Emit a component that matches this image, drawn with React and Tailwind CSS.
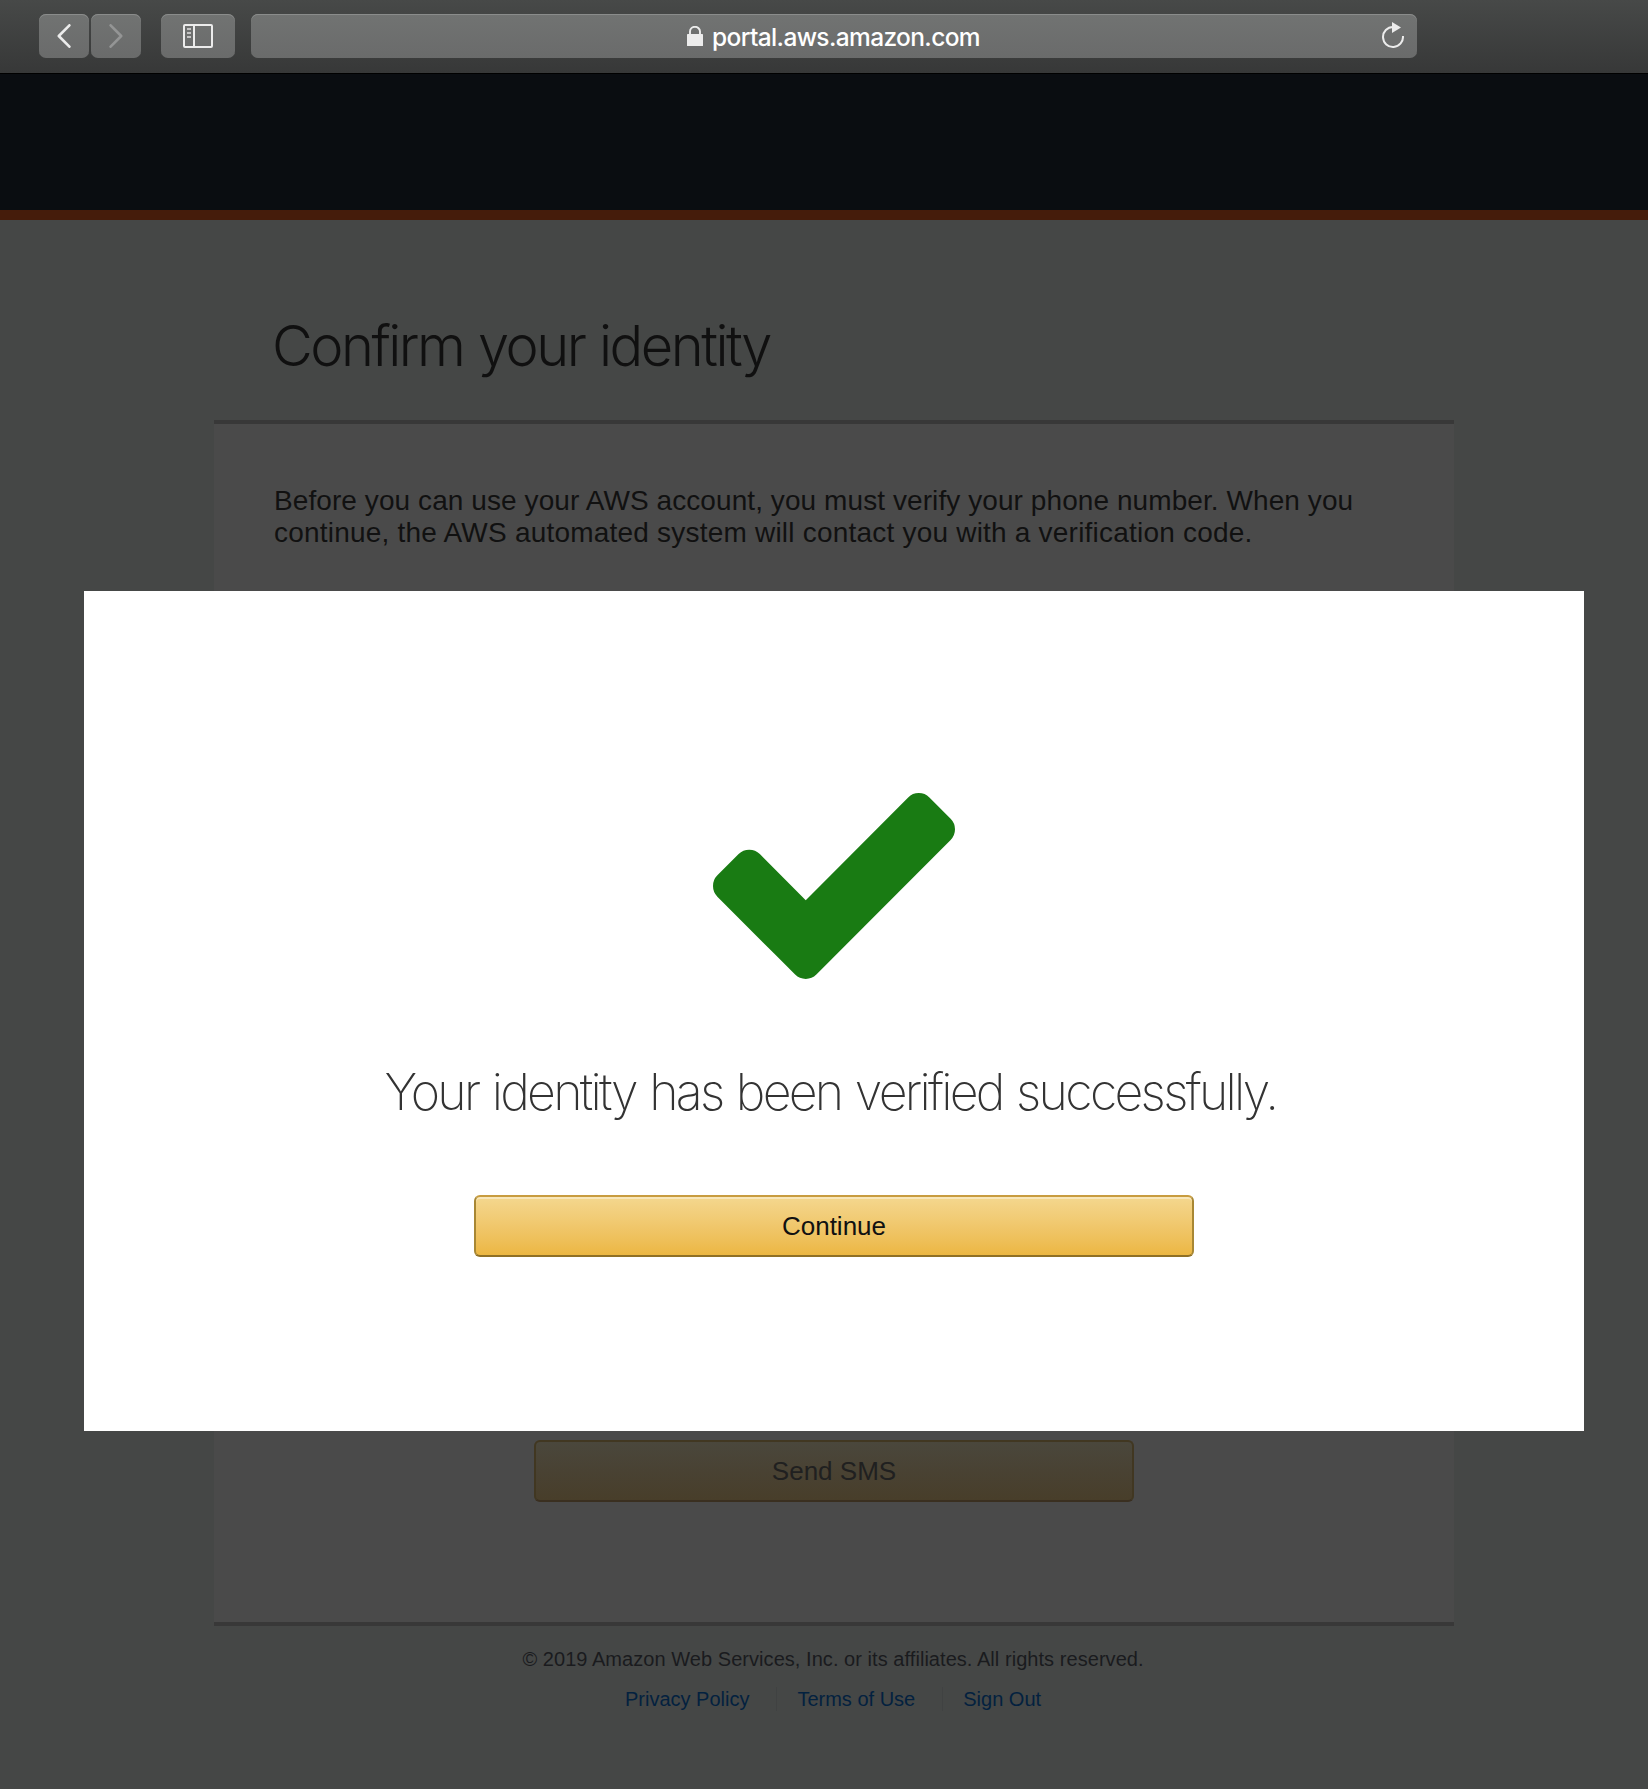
function BackIcon() {
  return (
    <svg width="14" height="24" viewBox="0 0 14 24" fill="none" stroke="#ececec" strokeWidth="2.6" strokeLinecap="round" strokeLinejoin="round">
      <path d="M12.4 1.3 L1.8 12 L12.4 22.7" />
    </svg>
  );
}

function ForwardIcon() {
  return (
    <svg width="14" height="24" viewBox="0 0 14 24" fill="none" stroke="#949595" strokeWidth="2.6" strokeLinecap="round" strokeLinejoin="round">
      <path d="M1.6 1.3 L12.2 12 L1.6 22.7" />
    </svg>
  );
}

function SidebarIcon() {
  return (
    <svg width="30" height="24" viewBox="0 0 30 24" fill="none">
      <rect x="1" y="1" width="28" height="22" rx="1" stroke="#ececec" strokeWidth="2" />
      <path d="M11 1V23" stroke="#ececec" strokeWidth="2" />
      <path d="M4 5H8M4 9H8M4 13H8" stroke="#c4c4c4" strokeWidth="2" />
    </svg>
  );
}

function LockIcon() {
  return (
    <svg width="16" height="20" viewBox="0 0 16 20" fill="none">
      <rect x="0" y="8" width="16" height="12" rx="0.6" fill="#ececec" />
      <path d="M3 9V5.6a5 4.8 0 0 1 10 0V9" stroke="#ececec" strokeWidth="1.9" />
    </svg>
  );
}

function ReloadIcon() {
  return (
    <svg width="24" height="28" viewBox="0 0 24 28" fill="none">
      <path d="M20.95 15A10 10 0 1 1 11 6" stroke="#ececec" strokeWidth="2" />
      <path d="M10 1L19 6.5L10 12Z" fill="#ececec" />
    </svg>
  );
}

function CheckIcon() {
  return (
    <svg className="mt-[202px] h-[186px] w-[242px] shrink-0" viewBox="121 334 1550 1188" preserveAspectRatio="none">
      <path
        fill="#197b13"
        d="M1671 566q0 40-28 68l-724 724-136 136q-28 28-68 28t-68-28l-136-136-362-362q-28-28-28-68t28-68l136-136q28-28 68-28t68 28l294 295 656-657q28-28 68-28t68 28l136 136q28 28 28 68z"
      />
    </svg>
  );
}

const chromeButton =
  "flex h-11 items-center justify-center rounded-[7px] bg-gradient-to-b from-[#717372] to-[#6a6b6b] shadow-[inset_0_1px_0_#8a8c8b]";

function Toolbar() {
  return (
    <header className="flex h-[74px] border-b border-black bg-gradient-to-b from-[#474948] to-[#373838] pt-[14px] pl-[39px]">
      <div className="flex gap-[2px]">
        <button className={chromeButton + " w-[50px]"}><BackIcon /></button>
        <button className={chromeButton + " w-[50px]"}><ForwardIcon /></button>
      </div>
      <button className={chromeButton + " ml-5 w-[74px]"}><SidebarIcon /></button>
      <div className={chromeButton + " ml-4 w-[1166px]"}>
        <div className="w-[34px]" />
        <div className="flex flex-1 items-center justify-center">
          <LockIcon />
          <span className="ml-[9px] pt-[2px] font-[Inter,sans-serif] text-[24.5px] leading-[42px] font-medium tracking-[-0.63px] text-white">
            portal.aws.amazon.com
          </span>
        </div>
        <div className="mr-[11px] mb-[2px]"><ReloadIcon /></div>
      </div>
    </header>
  );
}

function Modal() {
  return (
    <div className="absolute top-[591px] left-[84px] flex h-[840px] w-[1500px] flex-col items-center bg-white">
      <CheckIcon />
      <h2 className="mt-[81px] mr-[7px] h-[65px] font-[Inter,sans-serif] text-[50px] leading-[64px] font-extralight tracking-[-2.7px] [word-spacing:2px] whitespace-nowrap text-[#333]">
        Your identity has been verified successfully.
      </h2>
      <button className="mt-[70px] h-[62px] w-[720px] rounded-[6px] border-2 border-t-[#c89c3f] border-r-[#a88734] border-b-[#8f7025] border-l-[#a88734] bg-gradient-to-b from-[#f4d78e] to-[#ecb742] text-[26px] leading-[58px] text-[#111] shadow-[inset_0_2px_0_rgba(255,255,255,0.4)]">
        Continue
      </button>
    </div>
  );
}

export default function App() {
  return (
    <div className="relative flex h-[1789px] w-[1648px] flex-col overflow-hidden bg-[#454746] font-['Liberation_Sans',Arial,sans-serif]">
      <Toolbar />
      <div className="h-[146px] border-b-10 border-[#451c0b] bg-[#0a0d11]" />
      <main className="ml-[214px] w-[1240px]">
        <h1 className="h-[200px] pt-[90px] pl-[58px] font-[Inter,sans-serif] text-[56px] leading-[72px] font-light tracking-[-2.5px] [word-spacing:1.4px] text-[#101010]">
          Confirm your identity
        </h1>
        <section className="flex h-[1206px] flex-col items-center border-y-4 border-[#383838] bg-[#4a4a4a]">
          <p className="mt-[61px] w-full pl-[60px] text-[28px] leading-8 whitespace-nowrap text-[#111]">
            <span className="tracking-[0.08px]">
              Before you can use your AWS account, you must verify your phone number. When you
            </span>
            <br />
            <span className="tracking-[0.21px]">
              continue, the AWS automated system will contact you with a verification code.
            </span>
          </p>
          <button className="mt-[891px] h-[62px] w-[600px] rounded-[6px] border-2 border-[#413721] border-b-[#3a2f20] bg-gradient-to-b from-[#4a473c] via-[#494233] to-[#483e2a] text-[26px] leading-[58px] text-[#202020]">
            Send SMS
          </button>
        </section>
      </main>
      <footer className="flex w-[1666px] flex-col items-center pt-[21px] text-[20px]">
        <p className="leading-[24px] tracking-[0.05px] text-[#1a1b1e]">© 2019 Amazon Web Services, Inc. or its affiliates. All rights reserved.</p>
        <nav className="mt-[16px] flex leading-[24px] text-[#03213f]">
          <a className="border-r border-[#404242] pr-[27px]">Privacy Policy</a>
          <a className="border-r border-[#404242] pr-[27px] pl-[20px]">Terms of Use</a>
          <a className="pl-[20px]">Sign Out</a>
        </nav>
      </footer>
      <Modal />
    </div>
  );
}
